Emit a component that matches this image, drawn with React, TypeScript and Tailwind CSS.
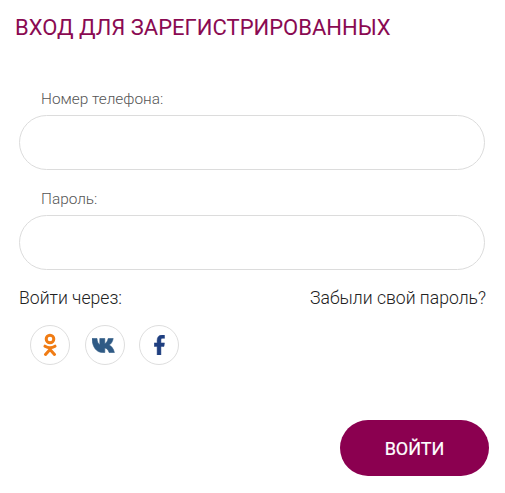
export default function App() {
  return (
    <div className="w-[505px] h-[493px] bg-white pt-[15px] pl-[15px] font-['Roboto',sans-serif] overflow-hidden">
      <h1 className="text-[22px] leading-[26px] font-normal text-[#8a0a52]">ВХОД ДЛЯ ЗАРЕГИСТРИРОВАННЫХ</h1>
      <form className="w-[470px] ml-[4px] mt-[49px]">
        <label className="block pl-[22px] text-[15.4px] leading-[18px] font-light text-[#555]">Номер телефона:</label>
        <div className="mt-[7px] h-[55px] w-[466px] rounded-full border border-[#dcdcdc] bg-white"></div>
        <label className="block mt-[20px] pl-[22px] text-[15.4px] leading-[18px] font-light text-[#555]">Пароль:</label>
        <div className="mt-[7px] h-[55px] w-[466px] rounded-full border border-[#dcdcdc] bg-white"></div>
        <div className="mt-[18px] flex justify-between w-[467px] text-[17.6px] leading-[21px] font-light text-[#222]">
          <span>Войти через:</span>
          <span>Забыли свой пароль?</span>
        </div>
        <div className="mt-[16px] ml-[11px] flex gap-[14.5px]">
          <div className="w-[40px] h-[40px] rounded-full border border-[#dedede] flex items-center justify-center">
            <svg width="14" height="24" viewBox="0 0 14 24" fill="none" stroke="#f07c14" strokeWidth="3" strokeLinecap="round">
              <circle cx="7" cy="6" r="3.8" />
              <path d="M2 13.2c3 1.8 7 1.800 10 0M7 15v1.500M7 16.500l-4.500 5M7 16.500l4.500 5" />
            </svg>
          </div>
          <div className="w-[40px] h-[40px] rounded-full border border-[#dedede] flex items-center justify-center">
            <svg width="25" height="15" viewBox="0 0 25 15">
              <path fill="#2f5a85" stroke="#2f5a85" strokeWidth="0.6" d="M0 .5h5c.2 3.200 1.200 5.400 2.800 6.200V.5h5v5.200c1.400-.4 2.700-2.400 3.400-5.200h5c-.6 3.400-2.400 5.600-3.900 6.600 1.900.9 4.100 3.200 5.100 7.400h-5.300c-.7-2.600-2.400-4.300-4.300-4.600v4.600h-2.300C4.500 14.500.4 9.200 0 .5z" />
            </svg>
          </div>
          <div className="w-[40px] h-[40px] rounded-full border border-[#dedede] flex items-center justify-center">
            <svg width="11" height="20" viewBox="0 0 11 21">
              <path fill="#1f3f80" stroke="#1f3f80" strokeWidth="0.5" d="M3 21v-9H0V8.300h3V5.600C3 2 5 0 8.200 0c1.200 0 2.300.1 2.600.2v3.300H8.900c-1.500 0-1.900.8-1.900 1.900v2.900h3.700l-.5 3.700H7v9z" />
            </svg>
          </div>
        </div>
        <div className="mt-[55px] ml-[321px] w-[149px] h-[56px] rounded-full bg-[#8b0050] flex items-center justify-center text-[18px] tracking-[-0.1px] text-white [-webkit-text-stroke:0.2px_white]">ВОЙТИ</div>
      </form>
    </div>
  );
}
